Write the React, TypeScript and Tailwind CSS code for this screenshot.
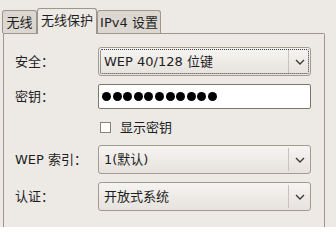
import React from "react";

const FONT = { fontFamily: '"DejaVu Sans", "Noto Sans CJK SC", sans-serif' };

function Chevron() {
  return (
    <svg width="10" height="6" viewBox="0 0 10 6" className="block">
      <path d="M1 1 L5 5 L9 1" fill="none" stroke="#3c3c3c" strokeWidth="1.4" />
    </svg>
  );
}

function Select({ text, focused }: { text: string; focused?: boolean }) {
  return (
    <div className="relative flex h-[29px] w-[213px] items-center rounded-[3px] border border-[#a29b90] bg-gradient-to-b from-[#f6f4f2] to-[#e6e2dd]">
      <div className="flex-1 pl-[5px] text-[13px] leading-none text-[#1e1e1e] whitespace-nowrap">{text}</div>
      <div className="h-[23px] w-px bg-[#c8c2ba]" />
      <div className="flex w-[21px] items-center justify-center">
        <Chevron />
      </div>
      {focused && (
        <div className="pointer-events-none absolute inset-[1px] rounded-[2px] border border-dotted border-[#3a3a3a]" />
      )}
    </div>
  );
}

function Label({ children }: { children: React.ReactNode }) {
  return <div className="w-[83px] text-[13px] leading-none text-[#1e1e1e] whitespace-nowrap">{children}</div>;
}

export default function App() {
  return (
    <div className="h-[227px] w-[336px] overflow-hidden bg-[#edeae6]" style={FONT}>
      <div className="flex h-[33px] items-end pl-[2px]">
        <div className="flex h-[23px] w-[35px] items-center justify-center rounded-t-[3px] border border-b-0 border-[#9d968c] bg-[#dcd7d0] pt-[1px] text-[13px] text-[#1e1e1e]">
          无线
        </div>
        <div className="relative z-10 mb-[-1px] flex h-[26px] w-[60px] items-center justify-center rounded-t-[3px] border border-b-0 border-[#9d968c] bg-[#edeae6] pb-[1px] text-[13px] text-[#1e1e1e]">
          无线保护
        </div>
        <div className="flex h-[23px] w-[64px] items-center justify-center rounded-t-[3px] border border-b-0 border-[#9d968c] bg-[#dcd7d0] pt-[1px] text-[13px] text-[#1e1e1e] whitespace-nowrap">
          IPv4 设置
        </div>
      </div>
      <div className="ml-[3px] h-[194px] w-[322px] rounded-tr-[2px] border border-b-0 border-[#9d968c] bg-[#edeae6] pl-[11px] pt-[13px]">
        <div className="flex items-center">
          <Label>安全：</Label>
          <Select text="WEP 40/128 位键" focused />
        </div>
        <div className="mt-[8px] flex items-center">
          <Label>密钥：</Label>
          <div
            className="flex h-[25px] w-[213px] items-center gap-[1.6px] rounded-[2px] border border-[#7d766b] bg-white pl-[3px]"
            aria-label="密钥"
          >
            {Array.from({ length: 11 }).map((_, i) => (
              <div key={i} className="h-[9px] w-[9px] rounded-full bg-black" />
            ))}
          </div>
        </div>
        <div className="flex h-[36px] items-center">
          <div className="w-[83px]" />
          <div className="ml-[2px] h-[11px] w-[11px] border border-[#8a8378] bg-white" />
          <div className="ml-[9px] text-[13px] leading-none text-[#1e1e1e]">显示密钥</div>
        </div>
        <div className="flex items-center">
          <Label>WEP 索引：</Label>
          <Select text="1(默认)" />
        </div>
        <div className="mt-[8px] flex items-center">
          <Label>认证：</Label>
          <Select text="开放式系统" />
        </div>
      </div>
    </div>
  );
}
